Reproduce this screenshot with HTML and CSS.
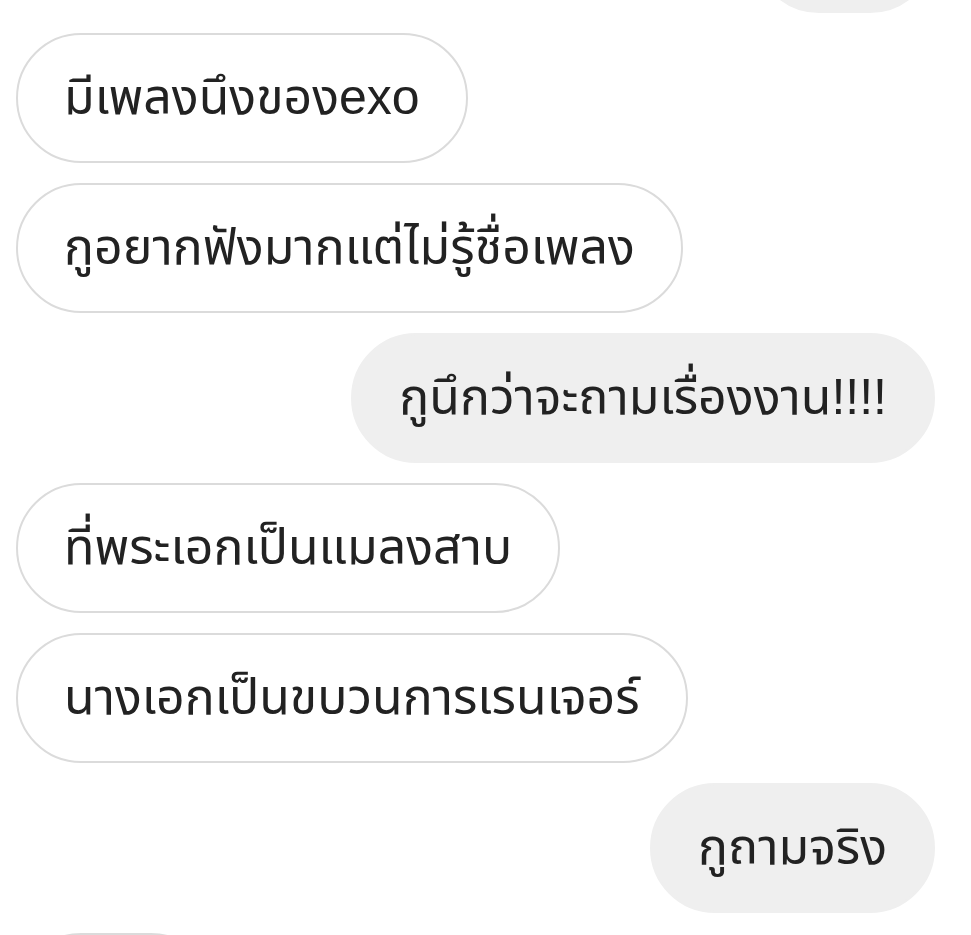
FILE: index.html
```html
<!DOCTYPE html>
<html lang="th">
<head>
<meta charset="UTF-8">
<meta name="viewport" content="width=device-width, initial-scale=1.0">
<title>แชท</title>
<link rel="stylesheet" href="styles.css">
</head>
<body>

<div class="chat">
    <div class="bubble sent">อะไร</div>
    <div class="bubble received">มีเพลงนึงของexo</div>
    <div class="bubble received">กูอยากฟังมากแต่ไม่รู้ชื่อเพลง</div>
    <div class="bubble sent">กูนึกว่าจะถามเรื่องงาน!!!!</div>
    <div class="bubble received">ที่พระเอกเป็นแมลงสาบ</div>
    <div class="bubble received">นางเอกเป็นขบวนการเรนเจอร์</div>
    <div class="bubble sent">กูถามจริง</div>
    <div class="bubble received">เพลง</div>
</div>

</body>
</html>
```

FILE: styles.css
```css
body {
    margin: 0;
    background: #ffffff;
    font-family: "Liberation Sans", "Noto Sans Thai", sans-serif;
    color: #222222;
    overflow: hidden;
    height: 935px;
}

.chat {
    display: flex;
    flex-direction: column;
    gap: 20px;
    padding: 0 36px 0 16px;
    margin-top: -117px;
}

.bubble {
    box-sizing: border-box;
    height: 130px;
    border-radius: 65px;
    padding: 2px 46px 0;
    display: flex;
    align-items: center;
    font-size: 50px;
    white-space: nowrap;
}

.received {
    align-self: flex-start;
    background: #ffffff;
    border: 2px solid #dbdbdb;
}

.sent {
    align-self: flex-end;
    background: #efefef;
    border: 2px solid #efefef;
}
```
